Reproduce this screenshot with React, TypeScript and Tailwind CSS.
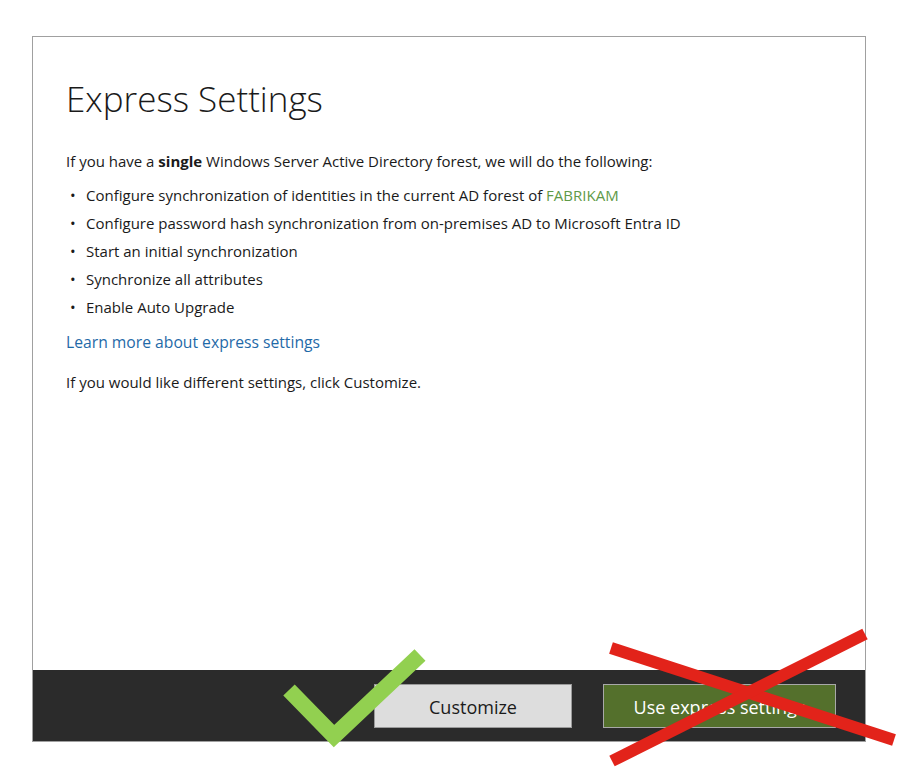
import React from 'react';

const bullets: React.ReactNode[] = [
  <>
    Configure synchronization of identities in the current AD forest of{' '}
    <span className="text-[#5f9a48]">FABRIKAM</span>
  </>,
  'Configure password hash synchronization from on-premises AD to Microsoft Entra ID',
  'Start an initial synchronization',
  'Synchronize all attributes',
  'Enable Auto Upgrade',
];

export default function App() {
  return (
    <div className="relative h-[778px] w-[909px] bg-white font-['Open_Sans','Noto_Sans',sans-serif] text-[#1a1a1a]">
      <div className="pl-[32px] pt-[36px]">
        <div className="flex h-[706px] w-[834px] flex-col border border-[#a0a0a0]">
          {/* Body */}
          <div className="flex-1 pl-[33px] pt-[40px]">
            <h1 className="text-[35px] font-light leading-[44px] text-[#1a1a1a]">Express Settings</h1>
            <p className="mt-[30px] text-[15px] leading-[20px]">
              If you have a <span className="font-bold">single</span> Windows Server Active Directory forest, we will do the following:
            </p>
            <ul className="mt-[14px] flex flex-col gap-[8px] text-[15px] leading-[20px]">
              {bullets.map((b, i) => (
                <li key={i} className="flex">
                  <span className="w-[20px] pl-[4px]">•</span>
                  <span>{b}</span>
                </li>
              ))}
            </ul>
            <a className="mt-[15px] block text-[15.7px] leading-[20px] text-[#1f6aa8]">Learn more about express settings</a>
            <p className="mt-[20px] text-[15px] leading-[20px]">If you would like different settings, click Customize.</p>
          </div>

          {/* Footer */}
          <div className="flex h-[71px] items-center justify-end gap-[31px] bg-[#2b2b2b] pr-[29px]">
            <button className="h-[44px] w-[198px] border border-[#9a9a9a] bg-[#dddddd] pt-[4px] text-[18px] text-[#1a1a1a]">
              Customize
            </button>
            <button className="h-[44px] w-[233px] border border-[#a8a8a8] bg-[#54702c] pt-[4px] text-[18px] text-white">
              Use express settings
            </button>
          </div>
        </div>
      </div>

      {/* Annotation marks */}
      <svg className="pointer-events-none absolute inset-0" width="909" height="778" viewBox="0 0 909 778">
        <polyline points="289,690 334,736 420,655" fill="none" stroke="#92d050" strokeWidth="16" strokeLinejoin="miter" />
        <line x1="611" y1="648" x2="894" y2="740" stroke="#e2231a" strokeWidth="12" />
        <line x1="612" y1="761" x2="865" y2="634" stroke="#e2231a" strokeWidth="12" />
      </svg>
    </div>
  );
}
